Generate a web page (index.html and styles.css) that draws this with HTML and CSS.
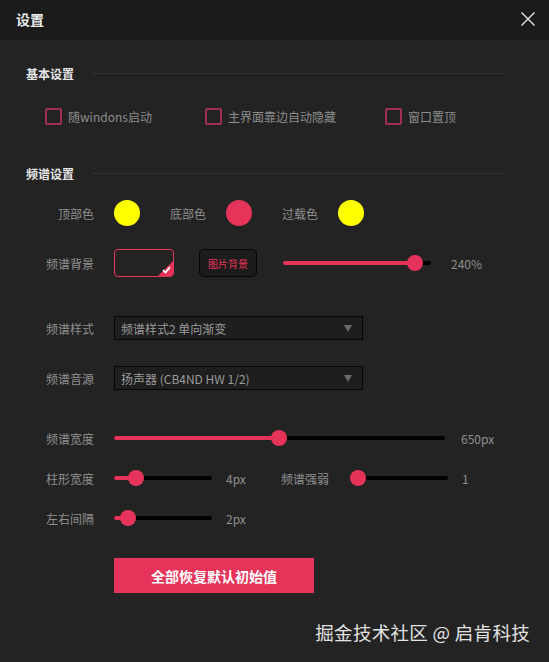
FILE: index.html
```html
<!DOCTYPE html>
<html lang="zh-CN">

<head>
    <meta charset="UTF-8">
    <meta name="viewport" content="width=device-width, initial-scale=1.0">
    <title>设置</title>
    <link rel="stylesheet" href="styles.css">
</head>

<body>
    <div class="window">
        <div class="titlebar">
            <span class="title">设置</span>
            <svg class="close" width="16" height="16" viewBox="0 0 16 16">
                <path d="M1.5 1.5 L14.5 14.5 M14.5 1.5 L1.5 14.5" stroke="#e8e8e8" stroke-width="1.3" fill="none" />
            </svg>
        </div>

        <div class="content">
            <div class="section-head first">
                <span>基本设置</span>
                <div class="divider"></div>
            </div>

            <div class="checks">
                <label class="check"><span class="box"></span>随windons启动</label>
                <label class="check"><span class="box"></span>主界面靠边自动隐藏</label>
                <label class="check"><span class="box"></span>窗口置顶</label>
            </div>

            <div class="section-head second">
                <span>频谱设置</span>
                <div class="divider"></div>
            </div>

            <div class="row colors">
                <span class="label">顶部色</span>
                <span class="swatch yellow"></span>
                <span class="label-inline">底部色</span>
                <span class="swatch pink"></span>
                <span class="label-inline">过载色</span>
                <span class="swatch yellow"></span>
            </div>

            <div class="row bg-row">
                <span class="label">频谱背景</span>
                <div class="bg-box">
                    <span class="corner"></span>
                    <svg class="tick" width="9" height="8" viewBox="0 0 9 8">
                        <path d="M1 4.2 L3.5 6.5 L8 1.2" stroke="#fff" stroke-width="1.8" fill="none" />
                    </svg>
                </div>
                <button class="img-btn">图片背景</button>
                <div class="slider w148">
                    <div class="fill" style="width: 89.2%"></div>
                    <div class="knob" style="left: 89.2%"></div>
                </div>
                <span class="value">240%</span>
            </div>

            <div class="row select-row first-select">
                <span class="label">频谱样式</span>
                <div class="select">
                    <span>频谱样式2 单向渐变</span>
                    <span class="arrow"></span>
                </div>
            </div>

            <div class="row select-row">
                <span class="label">频谱音源</span>
                <div class="select">
                    <span>扬声器 (CB4ND HW 1/2)</span>
                    <span class="arrow"></span>
                </div>
            </div>

            <div class="row slider-row first-slider">
                <span class="label">频谱宽度</span>
                <div class="slider w331">
                    <div class="fill" style="width: 49.8%"></div>
                    <div class="knob" style="left: 49.8%"></div>
                </div>
                <span class="value">650px</span>
            </div>

            <div class="row slider-row">
                <span class="label">柱形宽度</span>
                <div class="slider w98">
                    <div class="fill" style="width: 22.4%"></div>
                    <div class="knob" style="left: 22.4%"></div>
                </div>
                <span class="value short">4px</span>
                <span class="label-inline wide">频谱强弱</span>
                <div class="slider w98">
                    <div class="fill" style="width: 8.2%"></div>
                    <div class="knob" style="left: 8.2%"></div>
                </div>
                <span class="value">1</span>
            </div>

            <div class="row slider-row">
                <span class="label">左右间隔</span>
                <div class="slider w98">
                    <div class="fill" style="width: 14.3%"></div>
                    <div class="knob" style="left: 14.3%"></div>
                </div>
                <span class="value">2px</span>
            </div>

            <div class="row reset-row">
                <span class="label"></span>
                <button class="reset">全部恢复默认初始值</button>
            </div>
        </div>

        <div class="watermark">掘金技术社区 @ 启肯科技</div>
    </div>
</body>

</html>
```

FILE: styles.css
```css
body {
    margin: 0;
    background-color: #232323;
    font-family: "Noto Sans CJK SC", "Noto Sans", sans-serif;
    font-size: 12px;
    color: #8f8f8f;
}

.window {
    position: relative;
    width: 549px;
    height: 662px;
    background-color: #232323;
    overflow: hidden;
}

.titlebar {
    height: 40px;
    background-color: #1b1b1b;
    display: flex;
    align-items: center;
    justify-content: space-between;
    padding: 0 13px 0 16px;
}

.title {
    font-size: 14px;
    font-weight: bold;
    color: #ececec;
    margin-top: -2px;
}

.close {
    margin-top: -2px;
}

.content {
    padding: 0 45px 0 26px;
}

.section-head {
    display: flex;
    align-items: center;
    height: 18px;
    color: #e6e6e6;
    font-weight: bold;
}

.section-head.first {
    margin-top: 24px;
}

.section-head.second {
    margin-top: 40px;
}

.divider {
    flex-grow: 1;
    height: 1px;
    background-color: #333;
    margin-left: 18px;
}

.checks {
    display: grid;
    grid-template-columns: 160px 180px auto;
    margin: 26px 0 0 19px;
    height: 16px;
}

.check {
    display: flex;
    align-items: center;
    color: #8c8c8c;
}

.box {
    width: 13px;
    height: 13px;
    border: 2px solid #a0304f;
    border-radius: 2px;
    margin-right: 6px;
}

.row {
    display: flex;
    align-items: center;
    padding-left: 16px;
}

.label {
    width: 52px;
    text-align: right;
    margin-right: 20px;
    flex-shrink: 0;
}

.label-inline {
    margin: 0 20px 0 30px;
}

.colors {
    margin-top: 18px;
    height: 26px;
}

.swatch {
    width: 26px;
    height: 26px;
    border-radius: 50%;
}

.yellow {
    background-color: #ffff00;
}

.pink {
    background-color: #e6335a;
}

.bg-row {
    margin-top: 23px;
    height: 28px;
}

.bg-box {
    position: relative;
    width: 58px;
    height: 26px;
    border: 1px solid #e6335a;
    border-radius: 4px;
    overflow: hidden;
}

.corner {
    position: absolute;
    right: 0;
    bottom: 0;
    width: 0;
    height: 0;
    border-left: 15px solid transparent;
    border-bottom: 15px solid #e6335a;
}

.tick {
    position: absolute;
    right: 2px;
    bottom: 2px;
}

.img-btn {
    width: 58px;
    height: 28px;
    margin-left: 25px;
    margin-right: 26px;
    background-color: #1c1c1c;
    border: 1px solid #050505;
    border-radius: 5px;
    color: #e6335a;
    font-family: inherit;
    font-size: 10px;
    padding: 0;
}

.slider {
    position: relative;
    height: 4px;
    background-color: #000;
    border-radius: 2px;
    flex-shrink: 0;
}

.w148 {
    width: 148px;
}

.w331 {
    width: 331px;
}

.w98 {
    width: 98px;
}

.fill {
    height: 100%;
    background-color: #e6335a;
    border-radius: 2px;
}

.knob {
    position: absolute;
    top: 50%;
    width: 16px;
    height: 16px;
    border-radius: 50%;
    background-color: #e6335a;
    transform: translate(-50%, -50%);
}

.value {
    margin-left: 16px;
}

.bg-row .value {
    margin-left: 20px;
}

.slider-row .w98 + .value {
    margin-left: 14px;
}

.value.short {
    width: 34px;
}

.label-inline.wide {
    margin: 0 21px 0 21px;
}

.select-row {
    height: 24px;
    margin-top: 26px;
}

.select-row.first-select {
    margin-top: 39px;
}

.select {
    width: 231px;
    height: 22px;
    padding: 0 10px 0 6px;
    border: 1px solid #050505;
    background-color: #1e1e1e;
    display: flex;
    align-items: center;
    justify-content: space-between;
    color: #9a9a9a;
}

.arrow {
    width: 0;
    height: 0;
    border-left: 4px solid transparent;
    border-right: 4px solid transparent;
    border-top: 7px solid #6a6a6a;
}

.slider-row {
    height: 16px;
    margin-top: 24px;
}

.slider-row.first-slider {
    margin-top: 40px;
}

.reset-row {
    margin-top: 32px;
}

.reset {
    width: 200px;
    height: 35px;
    border: none;
    background-color: #e6335a;
    color: #fff;
    font-family: inherit;
    font-size: 14px;
    font-weight: bold;
    padding: 0;
}

.watermark {
    position: absolute;
    right: 19px;
    bottom: 17px;
    font-size: 18.5px;
    color: #e2e2e2;
    letter-spacing: 0.3px;
}
```
